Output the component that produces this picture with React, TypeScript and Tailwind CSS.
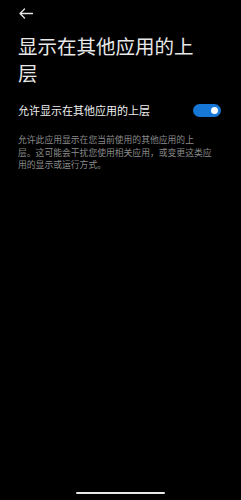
export default function App() {
  return (
    <div
      className="w-[241px] h-[500px] bg-black text-white flex flex-col overflow-hidden"
      style={{ fontFamily: '"Noto Sans CJK SC", "Noto Sans", sans-serif' }}
    >
      {/* Top bar */}
      <div className="h-[26px] pl-[19px] flex items-center">
        <svg width="14" height="11" viewBox="0 0 14 11" fill="none" stroke="#e6e6e6" strokeWidth="1.3">
          <path d="M13.5 5.5H1M5.5 1L1 5.5L5.5 10" strokeLinecap="round" strokeLinejoin="round" />
        </svg>
      </div>

      {/* Title */}
      <h1 className="mt-[6px] pl-[18px] pr-[40px] text-[19.5px] leading-[27px] text-[#e8e8e8] font-normal">
        显示在其他应用的上层
      </h1>

      {/* Toggle row */}
      <div className="mt-[12px] pl-[18px] pr-[20px] flex items-center justify-between h-[24px]">
        <span className="text-[11px] text-[#f0f0f0]">允许显示在其他应用的上层</span>
        <div className="w-[28px] h-[13px] rounded-full bg-[#1677d6] flex items-center justify-end pr-[3px]">
          <div className="w-[7px] h-[7px] rounded-full bg-white" />
        </div>
      </div>

      {/* Description */}
      <p className="mt-[12px] pl-[18px] text-[8.8px] leading-[12.5px] text-[#8a8a8a] whitespace-nowrap">
        允许此应用显示在您当前使用的其他应用的上
        <br />
        层。这可能会干扰您使用相关应用，或变更这类应
        <br />
        用的显示或运行方式。
      </p>

      <div className="flex-1" />

      {/* Home indicator */}
      <div className="h-[8px] flex justify-center">
        <div className="w-[89px] h-[2px] rounded-full bg-[#e8e8e8]" />
      </div>
    </div>
  );
}
